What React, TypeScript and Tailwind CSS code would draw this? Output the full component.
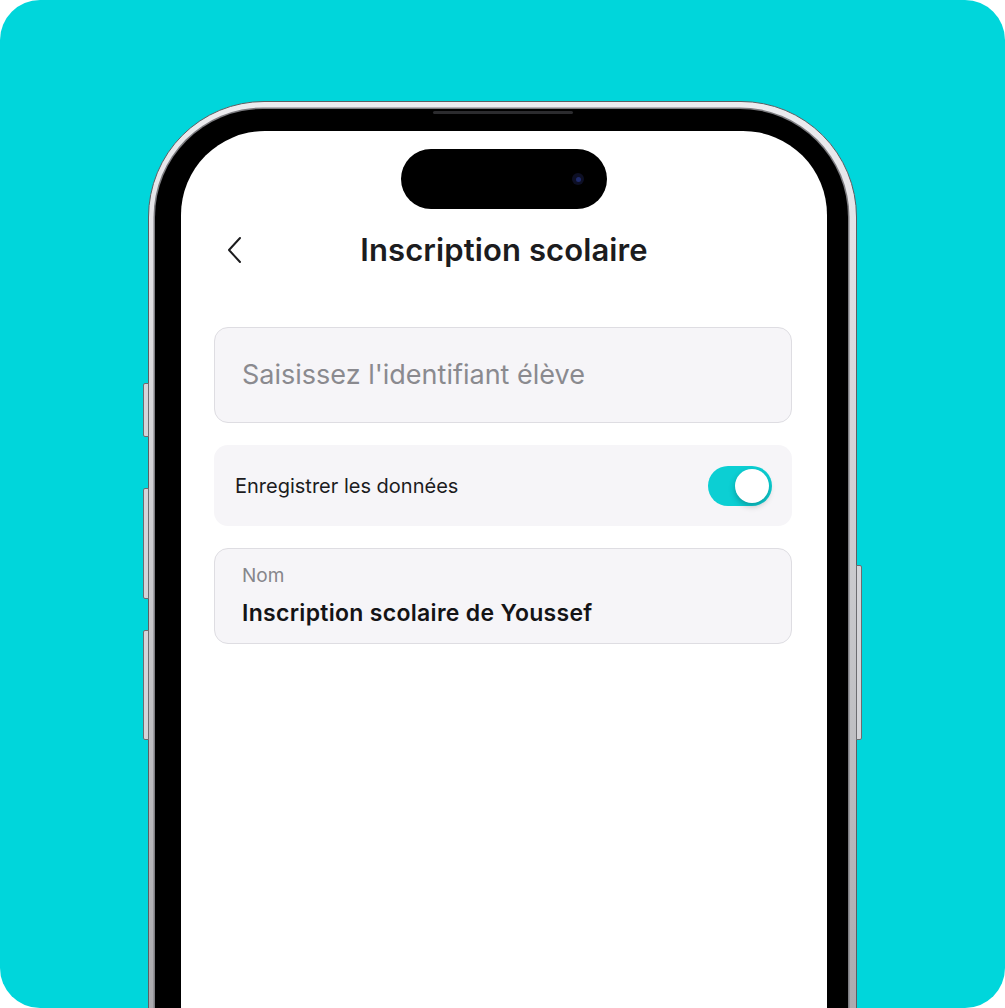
import React, { useState } from 'react';

// Phone mockup showing the "Inscription scolaire" form screen

const FONT = { fontFamily: 'Inter, "Noto Sans", sans-serif' };

const Toggle: React.FC<{ on: boolean; onChange: () => void }> = ({ on, onChange }) => (
  <button
    type="button"
    onClick={onChange}
    aria-pressed={on}
    className={`flex h-[40px] w-[64px] items-center rounded-full px-[3px] ${
      on ? 'justify-end bg-[#0ccfd3]' : 'justify-start bg-[#e2e2e6]'
    }`}
  >
    <span className="block h-[34px] w-[34px] rounded-full bg-white shadow-[0_3px_6px_rgba(0,0,0,0.25)]" />
  </button>
);

const PhoneScreen: React.FC = () => {
  const [save, setSave] = useState(true);

  return (
    <div className="flex h-[900px] flex-col rounded-t-[84px] bg-white" style={FONT}>
      {/* dynamic island */}
      <div className="mx-auto mt-[18px] flex h-[60px] w-[206px] items-center justify-end rounded-full bg-black pr-[23px]">
        <span className="flex h-[12px] w-[12px] items-center justify-center rounded-full bg-[#0d0f24]">
          <span className="h-[5px] w-[5px] rounded-full bg-[#1e2a6b]" />
        </span>
      </div>

      {/* header */}
      <div className="mt-[16px] grid h-[50px] grid-cols-[1fr_auto_1fr] items-center">
        <div className="pl-[44px]">
          <svg width="20" height="28" viewBox="0 0 20 28" fill="none">
            <path d="M15 2 L4 14 L15 26" stroke="#1c1c1e" strokeWidth="2" strokeLinecap="round" strokeLinejoin="round" />
          </svg>
        </div>
        <h1 className="text-[31px] font-semibold tracking-[0.1px] text-[#1c1c1e]">Inscription scolaire</h1>
        <div />
      </div>

      {/* form */}
      <div className="mt-[52px] flex flex-col pl-[33px] pr-[35px]">
        <div className="flex h-[96px] items-center rounded-[14px] border-[1.5px] border-[#dedde2] bg-[#f6f5f8] pl-[27px]">
          <span className="text-[27px] text-[#8a8a8f]">Saisissez l'identifiant élève</span>
        </div>

        <div className="mt-[22px] flex h-[81px] items-center justify-between rounded-[14px] bg-[#f6f5f8] pl-[21px] pr-[20px]">
          <span className="text-[20px] text-[#1c1c1e]">Enregistrer les données</span>
          <Toggle on={save} onChange={() => setSave((v) => !v)} />
        </div>

        <div className="mt-[22px] flex h-[96px] flex-col justify-center gap-[12px] rounded-[14px] border-[1.5px] border-[#dedde2] bg-[#f6f5f8] pl-[27px]">
          <span className="text-[19px] leading-[22px] text-[#86868b]">Nom</span>
          <span className="text-[23px] font-semibold leading-[28px] tracking-[0.3px] text-[#141416]">
            Inscription scolaire de Youssef
          </span>
        </div>
      </div>
    </div>
  );
};

export default function App() {
  return (
    <div className="h-[1008px] w-[1005px] bg-white">
      <div className="flex h-full justify-center overflow-hidden rounded-[40px] bg-[#00d6db] pt-[101px]">
        <div className="relative w-[709px] shrink-0">
          {/* side buttons */}
          <span className="absolute left-[-5px] top-[282px] h-[54px] w-[6px] rounded-l-[2px] border border-[#6c6c70] bg-[#d4d4d8]" />
          <span className="absolute left-[-5px] top-[387px] h-[111px] w-[6px] rounded-l-[2px] border border-[#6c6c70] bg-[#d4d4d8]" />
          <span className="absolute left-[-5px] top-[529px] h-[110px] w-[6px] rounded-l-[2px] border border-[#6c6c70] bg-[#d4d4d8]" />
          <span className="absolute right-[-5px] top-[464px] h-[175px] w-[6px] rounded-r-[2px] border border-[#6c6c70] bg-[#d4d4d8]" />

          {/* metal frame */}
          <div className="rounded-t-[116px] border-[1.5px] border-[#5e5e62] bg-[linear-gradient(180deg,#ececef,#a9a9ad)] pl-[6px] pr-[8px] pt-[7px]">
            {/* bezel */}
            <div className="relative rounded-t-[108px] bg-black pl-[26px] pr-[21px] pt-[22px] shadow-[0_0_0_1.5px_#7d7d81]">
              <span className="absolute left-[278px] top-[2px] h-[3px] w-[140px] rounded-full bg-[#2b2b2e]" />
              <PhoneScreen />
            </div>
          </div>
        </div>
      </div>
    </div>
  );
}
